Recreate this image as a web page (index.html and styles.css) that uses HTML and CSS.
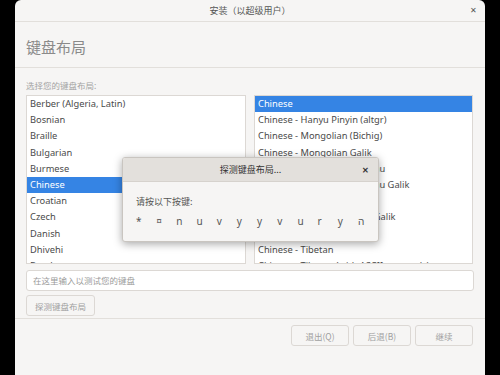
FILE: index.html
```html
<!DOCTYPE html>
<html>
<head>
<meta charset="utf-8">
<link rel="stylesheet" href="styles.css">
</head>
<body>
<div class="screen">
  <div class="window">
    <div class="titlebar">
      <span class="title">安装（以超级用户）</span>
      <span class="close">&#x2715;</span>
    </div>
    <div class="header"><h1>键盘布局</h1></div>
    <div class="content">
      <div class="label">选择您的键盘布局:</div>
      <div class="lists">
        <ul class="list">
          <li>Berber (Algeria, Latin)</li>
          <li>Bosnian</li>
          <li>Braille</li>
          <li>Bulgarian</li>
          <li>Burmese</li>
          <li class="selected">Chinese</li>
          <li>Croatian</li>
          <li>Czech</li>
          <li>Danish</li>
          <li>Dhivehi</li>
          <li>Dutch</li>
        </ul>
        <ul class="list">
          <li class="selected">Chinese</li>
          <li>Chinese - Hanyu Pinyin (altgr)</li>
          <li>Chinese - Mongolian (Bichig)</li>
          <li>Chinese - Mongolian Galik</li>
          <li>Chinese - Mongolian Manchu</li>
          <li>Chinese - Mongolian Manchu Galik</li>
          <li>Chinese - Mongolian Todo</li>
          <li>Chinese - Mongolian Todo Galik</li>
          <li>Chinese - Mongolian Xibe</li>
          <li>Chinese - Tibetan</li>
          <li>Chinese - Tibetan (with ASCII numerals)</li>
        </ul>
      </div>
      <div class="entry">在这里输入以测试您的键盘</div>
      <div class="btnrow"><button class="btn">探测键盘布局</button></div>
    </div>
    <div class="footer">
      <button class="btn wide">退出(Q)</button>
      <button class="btn wide">后退(B)</button>
      <button class="btn wide">继续</button>
    </div>

    <div class="dialog">
      <div class="dlg-title">
        <span>探测键盘布局...</span>
        <span class="dlg-close">&#x2715;</span>
      </div>
      <div class="dlg-body">
        <div class="prompt">请按以下按键:</div>
        <div class="keys">
          <span>*</span><span>¤</span><span>n</span><span>u</span><span>v</span><span>y</span><span>y</span><span>v</span><span>u</span><span>r</span><span>y</span><span>ה</span>
        </div>
      </div>
    </div>
  </div>
</div>
</body>
</html>
```
FILE: styles.css
```css
html, body {
    margin: 0;
    padding: 0;
    background: #000;
}

body {
    font-family: "Noto Sans", "Noto Sans CJK SC", sans-serif;
    font-size: 10px;
    color: #3d3d3d;
}

.screen {
    width: 500px;
    height: 375px;
    padding: 0 15px;
    box-sizing: border-box;
}

/* main installer window */
.window {
    position: relative;
    height: 375px;
    background: #f6f5f4;
    border-radius: 6px 6px 0 0;
    display: flex;
    flex-direction: column;
}

.titlebar {
    height: 21px;
    border-bottom: 1px solid #e2dfdb;
    display: flex;
    align-items: center;
    justify-content: center;
    position: relative;
}

.title {
    font-size: 9px;
    color: #555;
}

.close {
    position: absolute;
    right: 8px;
    top: 4px;
    font-size: 8px;
    color: #555;
}

.header {
    height: 46px;
    border-bottom: 1px solid #e2dfdb;
    display: flex;
    align-items: center;
    padding-left: 11px;
    padding-top: 3px;
    box-sizing: border-box;
}

.header h1 {
    margin: 0;
    font-family: "Noto Sans CJK SC", sans-serif;
    font-weight: normal;
    font-size: 15px;
    color: #8a8a8a;
}

.content {
    padding: 12px 11px 0;
    border-bottom: 1px solid #e2dfdb;
    height: 251px;
    box-sizing: border-box;
}

.label {
    font-family: "Noto Sans CJK SC", sans-serif;
    font-size: 8.5px;
    color: #a3a3a3;
    height: 15px;
    line-height: 10px;
}

.lists {
    display: grid;
    grid-template-columns: 220px 219px;
    gap: 8px;
}

.list {
    list-style: none;
    margin: 0;
    padding: 0;
    height: 169px;
    overflow: hidden;
    background: #fff;
    border: 1px solid #dcd8d4;
    box-sizing: border-box;
}

.list li {
    height: 16.2px;
    line-height: 16px;
    padding-left: 3px;
    font-size: 9.3px;
    color: #4a4a4a;
    white-space: nowrap;
}

.list li.selected {
    background: #3584e4;
    color: #fff;
}

.entry {
    margin-top: 6px;
    height: 19px;
    line-height: 19px;
    border: 1px solid #dcd8d4;
    border-radius: 3px;
    background: #fff;
    padding-left: 6px;
    font-family: "Noto Sans CJK SC", sans-serif;
    font-size: 8.5px;
    color: #9a9a9a;
    box-sizing: content-box;
}

.btnrow {
    margin-top: 4px;
}

.btn {
    font-family: "Noto Sans CJK SC", sans-serif;
    font-size: 8.5px;
    color: #a0a0a0;
    background: #f6f5f4;
    border: 1px solid #dcd8d4;
    border-radius: 3px;
    height: 21px;
    padding: 0 8px;
}

.footer {
    display: flex;
    justify-content: flex-end;
    gap: 4px;
    padding: 6px 12px 0 0;
}

.btn.wide {
    width: 58px;
    padding: 0;
}

/* keyboard detection popup */
.dialog {
    position: absolute;
    left: 107px;
    top: 157px;
    width: 255px;
    height: 83px;
    background: #f6f5f4;
    border: 1px solid #c9c5c0;
    border-radius: 3px;
    box-shadow: 0 2px 8px rgba(0, 0, 0, 0.35);
    overflow: hidden;
}

.dlg-title {
    height: 23px;
    background: #e3e0dc;
    border-bottom: 1px solid #d6d2cd;
    display: flex;
    align-items: center;
    justify-content: center;
    position: relative;
    font-family: "Noto Sans CJK SC", sans-serif;
    font-size: 9px;
    color: #333;
}

.dlg-close {
    position: absolute;
    right: 9px;
    top: 6px;
    font-size: 8px;
    font-weight: bold;
    color: #333;
}

.dlg-body {
    padding: 13px 0 0 13px;
}

.prompt {
    font-family: "Noto Sans CJK SC", sans-serif;
    font-size: 9px;
    color: #555;
}

.keys {
    display: flex;
    margin-top: 6px;
}

.keys span {
    width: 20.5px;
    font-size: 10px;
    color: #555;
}
```
